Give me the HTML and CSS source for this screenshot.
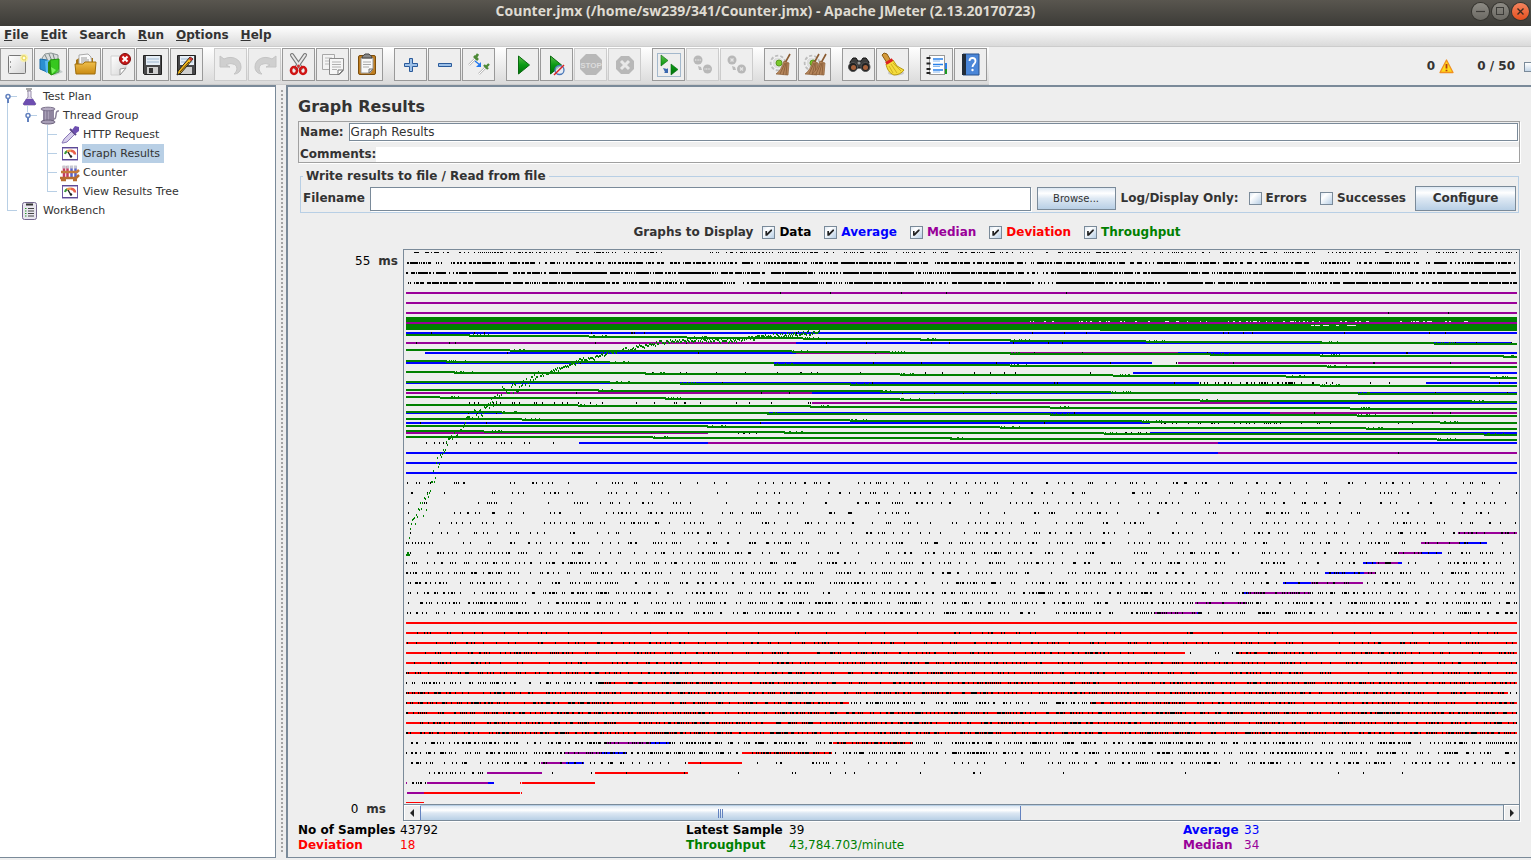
FILE: index.html
```html
<!DOCTYPE html>
<html lang="en">
<head>
<meta charset="utf-8">
<title>Counter.jmx - Apache JMeter</title>
<link rel="stylesheet" href="styles.css">
</head>
<body>
<svg class="defs" width="0" height="0" aria-hidden="true">
  <defs>
    <linearGradient id="gGreen" x1="0" y1="0" x2="0" y2="1"><stop offset="0" stop-color="#5fbf4a"/><stop offset=".5" stop-color="#0a9a14"/><stop offset="1" stop-color="#00700a"/></linearGradient>
    <linearGradient id="gGold" x1="0" y1="0" x2="0" y2="1"><stop offset="0" stop-color="#f0c04c"/><stop offset="1" stop-color="#c98a12"/></linearGradient>
    <linearGradient id="gPaper" x1="0" y1="0" x2="1" y2="1"><stop offset="0" stop-color="#ffffff"/><stop offset="1" stop-color="#d4d4d4"/></linearGradient>
    <linearGradient id="gFlask" x1="0" y1="0" x2="0" y2="1"><stop offset="0" stop-color="#f4f1fa"/><stop offset="1" stop-color="#c0b4d4"/></linearGradient>
    <symbol id="gear" viewBox="0 0 31 31">
      <circle cx="13" cy="14" r="7" fill="#e6e6e6" stroke="#bdbdbd" stroke-width="2.5" stroke-dasharray="3 2"/>
      <circle cx="13" cy="14" r="6" fill="#dedede" stroke="#f8f8f8"/>
      <circle cx="14" cy="14" r="3" fill="#7ac92a" stroke="#5a9a20"/>
    </symbol>
    <symbol id="broom" viewBox="0 0 31 31">
      <path d="M25 5l-5 9" stroke="#8a5a30" stroke-width="1.6"/>
      <path d="M19 12l5 2-1 12-12-1c4-3 6-7 8-13z" fill="#b5855a" stroke="#8c6038" stroke-width=".7"/>
      <path d="M20 14l-5 11M21 14l-3 12M22 14l-1 12" stroke="#7e5530" stroke-width=".7"/>
    </symbol>
    <symbol id="meter" viewBox="0 0 20 19">
      <rect x="2.5" y="4" width="15" height="12" fill="#fff" stroke="#6f5ba5" stroke-width="1"/>
      <path d="M2 3.500h16M2 15.500h16" stroke="#5d4a96" stroke-width="1"/>
      <path d="M5 10a5 4 0 0 1 2.500-3" fill="none" stroke="#3a9a3a" stroke-width="2"/>
      <path d="M7 7.500a5 4 0 0 1 4-.8" fill="none" stroke="#f09a50" stroke-width="2.500"/>
      <path d="M11 6.800a5 4 0 0 1 4 3.700" fill="none" stroke="#e8604a" stroke-width="2.500"/>
      <path d="M8 8l3 5" stroke="#222" stroke-width="1.400"/><circle cx="11" cy="12.500" r="1.200" fill="#222"/>
    </symbol>
  </defs>
</svg>

<header class="titlebar">
  <h1 class="titlebar-text">Counter.jmx (/home/sw239/341/Counter.jmx) - Apache JMeter (2.13.20170723)</h1>
  <div class="window-buttons">
    <button class="win" aria-label="Minimize"><svg width="17" height="17"><path d="M4 8.500h9" stroke="#3c3b37" stroke-width="1.200"/></svg></button>
    <button class="win" aria-label="Maximize"><svg width="17" height="17"><rect x="4.500" y="4.500" width="7" height="7" fill="none" stroke="#3c3b37"/></svg></button>
    <button class="win win-close" aria-label="Close"><svg width="17" height="17"><path d="M5.500 5.500l6 6m0-6l-6 6" stroke="#3c2a20" stroke-width="1.400"/></svg></button>
  </div>
</header>

<nav class="menubar">
  <button class="menu"><u>F</u>ile</button>
  <button class="menu"><u>E</u>dit</button>
  <button class="menu">Search</button>
  <button class="menu"><u>R</u>un</button>
  <button class="menu"><u>O</u>ptions</button>
  <button class="menu"><u>H</u>elp</button>
</nav>

<div class="toolbar">
  <div class="tools">
    <div class="tool-group">
      <button class="tool" aria-label="New"><svg viewBox="0 0 31 31"><rect x="7.500" y="6.500" width="17" height="18" rx="1" fill="url(#gPaper)" stroke="#777"/><path d="M9.500 12v2m0 3v2" stroke="#999"/><circle cx="23" cy="9" r="4" fill="#fbf3a0" opacity=".8"/><circle cx="23" cy="9" r="2" fill="#fffde0" stroke="#e8d34a"/></svg></button>
      <button class="tool" aria-label="Templates"><svg viewBox="0 0 31 31"><path d="M7 9l3-4 6-1 7 2v8H9z" fill="#d8dcdc" stroke="#8a9494"/><path d="M10 6l3 6M14 5l3 7M18 5l2 7" stroke="#7a8484"/><path d="M5 10l7 1v12l-7-3z" fill="#2b8fd0" stroke="#1c6da8"/><path d="M10 12l4-1v12l-3 1z" fill="#57b8f0"/><path d="M13 13l3-2v15l-3-2z" fill="#2f8a10"/><path d="M15 11l9-1v13l-8 3z" fill="#36c81e" stroke="#1f8f0c"/><path d="M16 18l5 3-4 4z" fill="#7df060"/><path d="M24 20l4 3-10 4z" fill="#9aa" opacity=".5"/></svg></button>
      <button class="tool" aria-label="Open"><svg viewBox="0 0 31 31"><path d="M7 20V11l3-2h14v12z" fill="#a87412"/><path d="M10 6l9-1 3 3 1 9H10z" fill="#fafafa" stroke="#aaa"/><path d="M12 9h6M12 11h8M12 13h8" stroke="#9a9a9a"/><path d="M6 15h8l2-2h11l-1 12H7z" fill="url(#gGold)" stroke="#a06f0c"/></svg></button>
      <button class="tool" aria-label="Close"><svg viewBox="0 0 31 31"><path d="M8 7h15v12l-6 7H8z" fill="url(#gPaper)" stroke="#d0d0d0"/><path d="M23 19l-6 7v-6z" fill="#fff" stroke="#999"/><circle cx="22" cy="10" r="5.500" fill="#c81818" stroke="#7e0c0c"/><path d="M19.500 7.500l5 5m0-5l-5 5" stroke="#fff" stroke-width="2"/></svg></button>
      <button class="tool" aria-label="Save"><svg viewBox="0 0 31 31"><path d="M6.500 6.500h18v19h-17l-1-1z" fill="#48484a" stroke="#222"/><rect x="9" y="7" width="14" height="9" fill="#e6eef6"/><path d="M10 10h12M10 13h12" stroke="#9db6cf"/><rect x="10" y="18" width="11" height="7" fill="#d0d0d0"/><rect x="12" y="19" width="4" height="5" fill="#333"/></svg></button>
      <button class="tool" aria-label="Save as"><svg viewBox="0 0 31 31"><path d="M6.500 6.500h18v19h-17l-1-1z" fill="#48484a" stroke="#222"/><rect x="9" y="7" width="14" height="9" fill="#e6eef6"/><path d="M10 10h12M10 13h12" stroke="#9db6cf"/><rect x="10" y="18" width="11" height="7" fill="#d0d0d0"/><path d="M19 8l3 2L10 24l-4 2 1-4z" fill="#f2b920" stroke="#222"/><path d="M18 13l-9 10" stroke="#5a3a00"/><path d="M19 8l3 2-2 2-2-2z" fill="#c33"/></svg></button>
    </div>
    <div class="tool-group">
      <button class="tool" disabled aria-label="Undo"><svg viewBox="0 0 31 31"><path d="M5 7l4 3c8-4 17 0 17 8 0 4-3 7-7 7 4-3 4-9-1-10-3-1-5 0-7 1l4 2H5z" fill="#cfcfcf" stroke="#c4c4c4"/></svg></button>
      <button class="tool" disabled aria-label="Redo"><svg viewBox="0 0 31 31"><path d="M27 7l-4 3c-8-4-17 0-17 8 0 4 3 7 7 7-4-3-4-9 1-10 3-1 5 0 7 1l-4 2h10z" fill="#cfcfcf" stroke="#c4c4c4"/></svg></button>
      <button class="tool" aria-label="Cut"><svg viewBox="0 0 31 31"><path d="M9 6l9 13M22 6l-9 13" stroke="#777" stroke-width="4" stroke-linecap="round"/><path d="M9 6l9 13M22 6l-9 13" stroke="#e8e8e8" stroke-width="2" stroke-linecap="round"/><ellipse cx="11" cy="21.500" rx="3" ry="3.500" fill="none" stroke="#d01414" stroke-width="2.600"/><ellipse cx="20" cy="21.500" rx="3" ry="3.500" fill="none" stroke="#d01414" stroke-width="2.600"/><circle cx="15.500" cy="17" r="1.500" fill="#c33"/></svg></button>
      <button class="tool" aria-label="Copy"><svg viewBox="0 0 31 31"><path d="M5.500 5.500h12v15h-12z" fill="#f3f3f3" stroke="#a8a8a8"/><path d="M8 9h7M8 12h4M8 15h4" stroke="#bbb"/><path d="M12.500 9.500h14v12l-4 4h-10z" fill="#f6f6f6" stroke="#8c8c8c"/><path d="M15 13h9M15 15.500h9M15 18h9M15 20.500h5" stroke="#b0b0b0"/><path d="M26 21l-5 5v-5z" fill="#fff" stroke="#777"/></svg></button>
      <button class="tool" aria-label="Paste"><svg viewBox="0 0 31 31"><rect x="7.500" y="6.500" width="17" height="19" rx="1.500" fill="#c07f22" stroke="#7c4d0c"/><path d="M10 9h12v11l-3 4h-9z" fill="#f8f8f8" stroke="#999"/><path d="M12 13h8M12 15.500h8M12 18h6" stroke="#aaa"/><path d="M22 20l-4 4v-4z" fill="#ddd" stroke="#777"/><path d="M11 9c0-3 2-2 3-4h4c1 2 3 1 3 4z" fill="#888" stroke="#444"/></svg></button>
    </div>
    <div class="tool-group">
      <button class="tool" aria-label="Expand all"><svg viewBox="0 0 31 31"><path d="M14.500 9.500h3v5h5v3h-5v5h-3v-5h-5v-3h5z" fill="#9cc0e8" stroke="#2a5a9a"/></svg></button>
      <button class="tool" aria-label="Collapse all"><svg viewBox="0 0 31 31"><path d="M9.500 14.500h13v3h-13z" fill="#9cc0e8" stroke="#2a5a9a"/></svg></button>
      <button class="tool" aria-label="Toggle"><svg viewBox="0 0 31 31"><path d="M6 16l8-8" stroke="#bbb" stroke-width="2.400"/><path d="M6 16l8-8" stroke="#fff"/><path d="M11 7l4 4M13 8l2-3" stroke="#4c8a36" stroke-width="2.600"/><path d="M16 25l7-7" stroke="#bbb" stroke-width="2.400"/><path d="M16 25l7-7" stroke="#fff"/><path d="M21 16l4 4M23 18l3-3" stroke="#4c8a36" stroke-width="2.400"/><path d="M12 12l5 4" stroke="#2277ee" stroke-width="1.500"/><path d="M18 13v5h-5z" fill="#2277ee"/></svg></button>
    </div>
    <div class="tool-group">
      <button class="tool" aria-label="Start"><svg viewBox="0 0 31 31"><path d="M11.500 7l11 9-11 9z" fill="url(#gGreen)" stroke="#0a6a10"/></svg></button>
      <button class="tool" aria-label="Start no pauses"><svg viewBox="0 0 31 31"><path d="M9.500 7l11 9-11 9z" fill="url(#gGreen)" stroke="#0a6a10"/><circle cx="18.500" cy="21" r="4.500" fill="#dfe8f5" fill-opacity=".7" stroke="#4a78b8" stroke-width="1.300"/><path d="M13 26L23 16" stroke="#d22" stroke-width="1.500"/></svg></button>
      <button class="tool" disabled aria-label="Stop"><svg viewBox="0 0 31 31"><path d="M11 5h10l6 6v9l-6 6H11l-6-6v-9z" fill="#b8b8b8"/><text x="16" y="19" class="stop-text" text-anchor="middle">STOP</text></svg></button>
      <button class="tool" disabled aria-label="Shutdown"><svg viewBox="0 0 31 31"><path d="M12 7h8l5 5v8l-5 5h-8l-5-5v-8z" fill="#b8b8b8"/><path d="M12 12l8 8m0-8l-8 8" stroke="#e8e8e8" stroke-width="3"/></svg></button>
    </div>
    <div class="tool-group">
      <button class="tool" aria-label="Remote start all"><svg viewBox="0 0 31 31"><rect x="4.500" y="4.500" width="23" height="23" fill="none" stroke="#a3b8cc"/><path d="M8 6l7 5.500-7 5.500zM18 15l7 5.500-7 5.500z" fill="url(#gGreen)" stroke="#0a6a10" stroke-width=".6"/><path d="M10 19l4 1 1-1v5h-4l1-1z" fill="#3a68b0"/></svg></button>
      <button class="tool" disabled aria-label="Remote stop all"><svg viewBox="0 0 31 31"><circle cx="11" cy="11" r="4.500" fill="#b8b8b8"/><circle cx="20.500" cy="20" r="4.500" fill="#b8b8b8"/><path d="M8 11h6M17.500 20h6" stroke="#d4d4d4" stroke-width="2" stroke-dasharray="1 .6"/><path d="M11 17l3 1 1 3h-3z" fill="#bbb"/></svg></button>
      <button class="tool" disabled aria-label="Remote shutdown all"><svg viewBox="0 0 31 31"><circle cx="11" cy="11" r="4.500" fill="#b8b8b8"/><circle cx="20.500" cy="20" r="4.500" fill="#b8b8b8"/><path d="M9.500 9.500l3 3m0-3l-3 3M19 18.500l3 3m0-3l-3 3" stroke="#e4e4e4" stroke-width="1.300"/><path d="M11 17l3 1 1 3h-3z" fill="#bbb"/></svg></button>
    </div>
    <div class="tool-group">
      <button class="tool" aria-label="Clear"><svg viewBox="0 0 31 31"><use href="#gear"/><use href="#broom"/></svg></button>
      <button class="tool" aria-label="Clear all"><svg viewBox="0 0 31 31"><use href="#gear"/><use href="#broom" x="-5"/><use href="#broom" x="2"/></svg></button>
    </div>
    <div class="tool-group">
      <button class="tool" aria-label="Find"><svg viewBox="0 0 31 31"><path d="M7 13l3-4h3l2 3h3l2-3h3l3 4-1 6H8z" fill="#3c3c3c" stroke="#111"/><circle cx="10" cy="18" r="4.500" fill="#222" stroke="#555"/><circle cx="10.500" cy="18.500" r="2.500" fill="#a5603a"/><circle cx="22.500" cy="18" r="4.500" fill="#222" stroke="#555"/><circle cx="22.500" cy="18.500" r="2.500" fill="#a5603a"/><circle cx="16" cy="14" r="1.500" fill="#999"/></svg></button>
      <button class="tool" aria-label="Reset search"><svg viewBox="0 0 31 31"><ellipse cx="19" cy="24" rx="8" ry="2.500" fill="#c8c8c8"/><path d="M5 6l2-2 3 1 4 7-4 2z" fill="#d49a3a" stroke="#8a5c14"/><path d="M9 15l7-4 4 6 7 4c-2 3-6 5-10 5-5-2-7-6-8-11z" fill="#f4dc3c" stroke="#b89a10"/><path d="M12 17l4 7M14 15l6 9M16 14l8 8" stroke="#cfb020"/><path d="M9 14.500l6.500-4" stroke="#d22" stroke-width="3"/></svg></button>
    </div>
    <div class="tool-group">
      <button class="tool" aria-label="Function helper"><svg viewBox="0 0 31 31"><rect x="21" y="14" width="5" height="6" fill="#2a80e8"/><rect x="21" y="20" width="5" height="5" fill="#1a9a20"/><rect x="8.500" y="6.500" width="15" height="19" fill="#fff" stroke="#999"/><path d="M12 10h10M12 15.500h10M12 21h10" stroke="#2a80e8" stroke-width="1.500"/><path d="M12 12h7M12 17.500h7M12 23h7" stroke="#88b8f0"/><path d="M5.500 9h4M5.500 14.500h4M5.500 20h4M5.500 24h4" stroke="#222" stroke-width="2"/></svg></button>
      <button class="tool" aria-label="Help"><svg viewBox="0 0 31 31"><path d="M8 5h16v21H8z" fill="#4a86d8" stroke="#28538e"/><path d="M7 5h4v21H7z" fill="#222c38"/><path d="M14.500 12c0-4 6-4 6 0 0 3-3 3-3 6" fill="none" stroke="#fff" stroke-width="1.800"/><circle cx="17.500" cy="21" r="1.200" fill="#fff"/></svg></button>
    </div>
  </div>
  <div class="status">
    <span>0</span>
    <svg class="warn" width="15" height="15" viewBox="0 0 15 15"><path d="M7.500 1L14 13.500H1z" fill="#ffd91a" stroke="#f09020" stroke-width="1.300" stroke-linejoin="round"/><path d="M7.500 5v4.500M7.500 10.800v1.500" stroke="#b23c10" stroke-width="1.800"/></svg>
    <span class="threads">0 / 50</span>
    <span class="run-light"></span>
  </div>
</div>

<main class="workspace">
  <aside class="tree">
    <ul class="nodes">
      <li class="node"><svg class="gutter" width="20" height="19"><path d="M7.500 10v9M10 9.500h7" stroke="#b8cfe5"/><path d="M8 12v4" stroke="#6382bf" stroke-width="2"/><circle cx="8" cy="9.500" r="2" fill="#fff" stroke="#6382bf" stroke-width="1.500"/></svg><svg width="20" height="19" viewBox="0 0 20 19"><path d="M6 2h6M7 4h4" stroke="#555" stroke-width="1.200"/><path d="M8 4v6l-5 7 1 1h11l1-1-5-7V4z" fill="url(#gFlask)" stroke="#9a90ac"/><path d="M6 12h7l3 5-1 1H4l-1-1z" fill="#6d4eb0"/></svg><span class="label">Test Plan</span></li>
      <li class="node"><svg class="gutter" width="40" height="19"><path d="M7.500 0v19M27.500 0v6M30 9.500h7" stroke="#b8cfe5"/><path d="M28 12v4" stroke="#6382bf" stroke-width="2"/><circle cx="28" cy="9.500" r="2" fill="#fff" stroke="#6382bf" stroke-width="1.500"/></svg><svg width="20" height="19" viewBox="0 0 20 19"><path d="M3 3h11v13H3z" fill="#8f859f"/><path d="M5.500 4v11M8.500 4v11" stroke="#aaa1b8"/><ellipse cx="8" cy="3" rx="7" ry="1.800" fill="#b4abc2" stroke="#7c728c"/><ellipse cx="8" cy="16" rx="7" ry="2" fill="#a79eb6" stroke="#6c627c"/><path d="M13 13c5 1 1-9 6-8" fill="none" stroke="#8a8098" stroke-width="1.500"/></svg><span class="label">Thread Group</span></li>
      <li class="node"><svg class="gutter" width="60" height="19"><path d="M7.500 0v19M47.500 0v19M48 9.500h9" stroke="#b8cfe5"/></svg><svg width="20" height="19" viewBox="0 0 20 19"><path d="M2 18l2-4 8-8 3 3-8 8-4 1z" fill="#d5cdea" stroke="#8a78b8"/><path d="M10 4l6 6" stroke="#5a4688" stroke-width="2"/><path d="M12 5l3-4 4 1v4l-4 3z" fill="#6d4eb0"/></svg><span class="label">HTTP Request</span></li>
      <li class="node"><svg class="gutter" width="60" height="19"><path d="M7.500 0v19M47.500 0v19M48 9.500h9" stroke="#b8cfe5"/></svg><svg width="20" height="19"><use href="#meter"/></svg><span class="label selected">Graph Results</span></li>
      <li class="node"><svg class="gutter" width="60" height="19"><path d="M7.500 0v19M47.500 0v19M48 9.500h9" stroke="#b8cfe5"/></svg><svg width="20" height="19" viewBox="0 0 20 19"><path d="M4 3v12M7.500 3v12" stroke="#c43c64" stroke-width="2.500"/><path d="M11.500 3v12M15.500 3v12" stroke="#5a62c8" stroke-width="2.500"/><path d="M2.500 4h15" stroke="#c8c8d0" stroke-width="3" stroke-dasharray="3 .8"/><path d="M1 9h16l2-2" fill="none" stroke="#c47a3c" stroke-width="2.500"/><path d="M0 15h16l3-3M1 17h5M13 17h4" fill="none" stroke="#b86c30" stroke-width="2.500"/></svg><span class="label">Counter</span></li>
      <li class="node"><svg class="gutter" width="60" height="19"><path d="M7.500 0v19M47.500 0v10M47 9.500h10" stroke="#b8cfe5"/></svg><svg width="20" height="19"><use href="#meter"/></svg><span class="label">View Results Tree</span></li>
      <li class="node"><svg class="gutter" width="20" height="19"><path d="M7.500 0v10M7 9.500h10" stroke="#b8cfe5"/></svg><svg width="20" height="19" viewBox="0 0 20 19"><rect x="2.500" y="1.500" width="14" height="17" rx="2" fill="#e9e6ef" stroke="#756890"/><path d="M6 3.500h7" stroke="#333" stroke-width="2"/><path d="M8 7.500h6M8 10h6M8 12.500h6M8 15h6" stroke="#444"/><path d="M5 7.500h1.500M5 10h1.500M5 12.500h1.500M5 15h1.500" stroke="#2a9a2a" stroke-width="1.200"/></svg><span class="label">WorkBench</span></li>
    </ul>
  </aside>
  <div class="divider"></div>
  <section class="panel">
    <h2 class="panel-title">Graph Results</h2>
    <div class="identity">
      <div class="name-row"><label for="name">Name:</label><input id="name" class="field" type="text" value="Graph Results"></div>
      <div class="comment-row"><label for="comments">Comments:</label><input id="comments" class="comment" type="text"></div>
    </div>
    <fieldset class="file-box">
      <legend>Write results to file / Read from file</legend>
      <div class="file-row">
        <label for="filename">Filename</label>
        <input id="filename" class="field filename" type="text">
        <button class="btn btn-small">Browse...</button>
        <span class="only">Log/Display Only:</span>
        <label class="check"><input type="checkbox">Errors</label>
        <label class="check"><input type="checkbox">Successes</label>
        <button class="btn btn-configure">Configure</button>
      </div>
    </fieldset>
    <div class="series">
      <span>Graphs to Display</span>
      <label class="check c-data"><input type="checkbox" checked>Data</label>
      <label class="check c-average"><input type="checkbox" checked>Average</label>
      <label class="check c-median"><input type="checkbox" checked>Median</label>
      <label class="check c-deviation"><input type="checkbox" checked>Deviation</label>
      <label class="check c-throughput"><input type="checkbox" checked>Throughput</label>
    </div>
    <div class="chart">
      <div class="axis">
        <div class="axis-top"><span class="num">55</span><b>ms</b></div>
        <div class="axis-bottom"><span class="num">0</span><b>ms</b></div>
      </div>
      <div class="scrollpane">
        <div class="plot"><svg id="plot" class="plot-svg" shape-rendering="crispEdges" role="img" aria-label="Response time graph"></svg></div>
        <div class="scrollbar">
          <button class="arrow arrow-left" aria-label="Scroll left"><svg width="6" height="8"><path d="M5 0v8L1 4z" fill="#222"/></svg></button>
          <div class="track"><div class="thumb"><i></i><i></i><i></i></div></div>
          <button class="arrow arrow-right" aria-label="Scroll right"><svg width="6" height="8"><path d="M1 0v8l4-4z" fill="#222"/></svg></button>
        </div>
      </div>
    </div>
    <div class="stats">
      <div class="stat-col">
        <b class="c-data">No of Samples</b><span class="c-data">43792</span>
        <b class="c-deviation">Deviation</b><span class="c-deviation">18</span>
      </div>
      <div class="stat-col">
        <b class="c-data">Latest Sample</b><span class="c-data">39</span>
        <b class="c-throughput">Throughput</b><span class="c-throughput">43,784.703/minute</span>
      </div>
      <div class="stat-col stat-narrow">
        <b class="c-average">Average</b><span class="c-average">33</span>
        <b class="c-median">Median</b><span class="c-median">34</span>
      </div>
    </div>
  </section>
</main>
<script src="plot.js"></script>
</body>
</html>
```

FILE: styles.css
```css
* { box-sizing: border-box; }
html, body { height: 100%; }
body {
  margin: 0;
  display: flex;
  flex-direction: column;
  background: #eeeeee;
  color: #333333;
  font: bold 12px/15px "DejaVu Sans", sans-serif;
  overflow: hidden;
}
button, input { font: inherit; color: inherit; margin: 0; padding: 0; }
.defs { position: absolute; }

.titlebar {
  flex: none;
  height: 26px;
  display: grid;
  grid-template-columns: 1fr auto 1fr;
  align-items: center;
  background: linear-gradient(#59564f, #3c3b37);
  color: #dfdbd2;
}
.titlebar-text {
  grid-column: 2;
  margin: 0;
  padding-bottom: 4px;
  font: bold 14px/18px "Open Sans", "Noto Sans", sans-serif;
  white-space: nowrap;
}
.window-buttons { justify-self: end; display: flex; gap: 3px; padding: 0 2px 4px 0; }
.win {
  width: 17px;
  height: 17px;
  border: 0;
  border-radius: 50%;
  background: linear-gradient(#8d8b84, #6b6963);
  box-shadow: 0 0 0 1px #35342f;
}
.win svg { display: block; }
.win-close { background: linear-gradient(#f4845e, #e4501f); }

.menubar {
  flex: none;
  height: 21px;
  display: flex;
  align-items: center;
  gap: 12px;
  padding: 0 4px 1px;
  background: linear-gradient(#ffffff, #dadada);
  border-bottom: 1px solid #cccccc;
}
.menu { border: 0; background: none; }

.toolbar { flex: none; height: 38px; display: flex; justify-content: space-between; }
.tools {
  display: flex;
  gap: 11px;
  padding: 1px 2px 3px 0;
  background: linear-gradient(#ffffff, #dadada);
  border-bottom: 1px solid #cccccc;
}
.tool-group { display: flex; gap: 1px; }
.tool {
  width: 33px;
  height: 33px;
  border: 1px solid #999999;
  background: #eeeeee;
}
.tool:disabled { border-color: #cccccc; }
.tool svg { display: block; width: 31px; height: 31px; }
.stop-text { font: bold 8px "Liberation Sans", sans-serif; fill: #dcdcdc; }
.status { display: flex; align-items: center; padding-top: 1px; }
.warn { margin: 0 23px 0 4px; }
.run-light {
  width: 7px;
  height: 10px;
  margin-left: 9px;
  border: 1px solid #7a8a99;
  border-right: 0;
  background: linear-gradient(#ffffff, #c4d6e8);
}

.workspace { flex: 1; min-height: 0; display: flex; padding-bottom: 2px; }
.tree {
  flex: none;
  width: 276px;
  background: #ffffff;
  border: solid #7a8a99;
  border-width: 2px 1px 1px 0;
}
.nodes { list-style: none; margin: 0; padding: 0; }
.node { display: flex; height: 19px; font-weight: normal; font-size: 11px; line-height: 19px; }
.node svg { flex: none; }
.label { margin-left: 2px; padding: 0 4px 0 1px; }
.selected { background: #b8cfe5; }

.divider {
  flex: none;
  width: 10px;
  background: radial-gradient(circle, #8a8a8a 0 0.6px, transparent 1px) 4px 4px / 4px 4px content-box #eeeeee;
  padding: 4px 2px 4px 4px;
}

.panel {
  flex: 1;
  min-width: 0;
  display: flex;
  flex-direction: column;
  padding: 10px 11px 4px 10px;
  border: solid #7a8a99;
  border-width: 2px 0 1px 2px;
}
.panel-title { margin: 0 0 4px; font-size: 16px; line-height: 20px; }
.identity { border: 1px solid #a0a0a0; box-shadow: 1px 1px #ffffff; }
.name-row { display: flex; align-items: center; gap: 5px; padding: 1px 1px 6px 1px; }
.comment-row { display: flex; padding-left: 1px; }
.field {
  flex: 1;
  min-width: 0;
  height: 18px;
  border: 1px solid #7a8a99;
  box-shadow: 1px 1px #ffffff;
  background: #ffffff;
  padding: 0 1px;
  font-weight: normal;
}
.comment { flex: 1; min-width: 0; height: 15px; border: 0; background: #ffffff; font-weight: normal; }
.file-box { margin: 6px 1px 0 2px; padding: 0 2px 1px 2px; border: 1px solid #b8cfe5; min-width: 0; }
.file-box legend { padding: 0 3px; }
.file-row { display: flex; align-items: center; padding-top: 2px; }
.filename { height: 24px; margin: 0 6px 0 5px; }
.btn {
  border: 1px solid #7a8a99;
  background: linear-gradient(#dde8f3, #ffffff 25%, #dde8f3 50%, #b8cfe5);
}
.btn-small { width: 79px; height: 23px; font-size: 10px; font-weight: normal; }
.btn-configure { width: 101px; height: 25px; margin-left: 9px; }
.only { margin-left: 5px; }
.file-row .check { margin-left: 10px; }
.file-row .check + .check { margin-left: 13px; }
.check { display: flex; align-items: center; gap: 4px; }
.check input {
  appearance: none;
  position: relative;
  width: 13px;
  height: 13px;
  border: 1px solid #7a8a99;
  background: linear-gradient(135deg, #dde8f3, #ffffff 30%, #b8cfe5);
}
.check input:checked::after {
  content: "";
  position: absolute;
  inset: 2px;
  background: #222222;
  clip-path: polygon(0 28%, 24% 28%, 24% 60%, 78% 6%, 96% 6%, 96% 24%, 26% 96%, 0 96%);
}
.series { display: flex; justify-content: center; gap: 13px; padding: 12px 4px 9px 0; }
.series span { margin-right: -4px; }
.c-data { color: #000000; }
.c-average { color: #0000ff; }
.c-median { color: #990099; }
.c-deviation { color: #ff0000; }
.c-throughput { color: #008000; }

.chart { flex: 1; min-height: 0; display: flex; }
.axis {
  flex: none;
  width: 105px;
  display: flex;
  flex-direction: column;
  justify-content: space-between;
  padding: 5px 5px 4px 0;
}
.axis-top, .axis-bottom { display: flex; justify-content: flex-end; gap: 8px; }
.axis-bottom { padding-right: 12px; }
.num { color: #000000; font-weight: normal; }
.scrollpane {
  flex: 1;
  min-width: 0;
  display: flex;
  flex-direction: column;
  border: 1px solid #7a8a99;
  box-shadow: 1px 1px #ffffff;
}
.plot { flex: 1; min-height: 0; overflow: hidden; }
.plot-svg { display: block; width: 100%; height: 100%; }
.scrollbar { flex: none; height: 16px; display: flex; border-top: 1px solid #7a8a99; }
.arrow {
  flex: none;
  width: 16px;
  border: 0;
  background: #eeeeee;
  box-shadow: inset 1px 1px #ffffff;
  display: flex;
  align-items: center;
  justify-content: center;
}
.arrow-right { border-left: 1px solid #7a8a99; }
.track { flex: 1; display: flex; border-top: 1px solid #b8cfe5; }
.thumb {
  width: 55.5%;
  display: flex;
  align-items: center;
  justify-content: center;
  gap: 1px;
  border: solid #6382bf;
  border-width: 0 1px;
  background: linear-gradient(#dde8f3, #ffffff 30%, #dde8f3 50%, #b8cfe5);
}
.thumb i { width: 1px; height: 9px; background: #6382bf; }

.stats {
  display: grid;
  grid-template-columns: 388fr 497fr 337fr;
  padding-top: 2px;
}
.stat-col { display: grid; grid-template-columns: 102px 1fr; }
.stat-col span { font-weight: normal; }
.stat-col:nth-child(2) { grid-template-columns: 103px 1fr; }
.stat-narrow { grid-template-columns: 61px 1fr; }
```

FILE: plot.js
```js
(function () {
  var LEFT = 404, TOP = 250, X0 = 406, X1 = 1517;
  var COLORS = { k: '#000000', b: '#0000ff', p: '#990099', r: '#ff0000', g: '#008000', w: '#eeeeee' };
  var svg = document.getElementById('plot');
  var seed = 20170723;
  function rnd() {
    seed = (seed + 0x6D2B79F5) | 0;
    var t = Math.imul(seed ^ (seed >>> 15), 1 | seed);
    t = (t + Math.imul(t ^ (t >>> 7), 61 | t)) ^ t;
    return ((t ^ (t >>> 14)) >>> 0) / 4294967296;
  }
  function rect(x, y, w, h) {
    return 'M' + (x - LEFT) + ' ' + (y - TOP) + 'h' + w + 'v' + h + 'h-' + w + 'z';
  }
  function paint(color, d) {
    var path = document.createElementNS('http://www.w3.org/2000/svg', 'path');
    path.setAttribute('fill', COLORS[color]);
    path.setAttribute('d', d);
    svg.appendChild(path);
  }

  // Samples: [row, density, from, to, height]
  var samples = [
    [252, .50, 409, 665, 1], [252, .45, 710, X1, 1],
    [262, .60], [272, .78], [282, .78], [292, .008], [302, .003], [312, .003],
    [322, .008], [332, .025], [342, .015], [352, .01], [362, .01], [372, .05, 450, 1133],
    [382, .015], [382, .40, 1200, 1300], [382, .10, 1300, 1425],
    [392, .01], [402, .12, 440, 812], [412, .006], [422, .006],
    [422, .30, 1150, 1290], [422, .08, 1290, 1420], [432, .35, 735, 760], [432, .45, 1125, 1147],
    [442, .14, 413, 570], [452, .002], [462, .003],
    [482, .15], [492, .12], [502, .14], [512, .16], [522, .18], [532, .19], [542, .20],
    [552, .23], [562, .26], [572, .27], [582, .30], [592, .34], [602, .36], [612, .38],
    [632, .10], [642, .17], [652, .24], [662, .26], [672, .30], [682, .36], [692, .40],
    [702, .40], [712, .44], [722, .42], [732, .46], [742, .48], [752, .46], [762, .28, 406, 600],
    [762, .12, 600, 1050], [762, .38, 1050, X1], [772, .24, 428, 490], [772, .04, 545, 950],
    [772, .01, 950, X1], [782, .45, 412, 430]
  ];

  // Level lines: colour, row, from, to
  var lines = [
    ['p', 292], ['p', 302], ['p', 312], ['b', 332],
    ['p', 342, 406, 796], ['b', 342, 796, 1512],
    ['b', 352, 425, 796], ['p', 352, 796, 1178], ['b', 352, 1178, 1517],
    ['b', 362, 406, 1152], ['p', 362, 1178, 1517], ['b', 372, 1133, 1517],
    ['b', 382, 406, 1199], ['b', 382, 1426, 1517],
    ['p', 392, 406, 812], ['b', 392, 812, 1517],
    ['p', 402, 812, 1270], ['b', 402, 1270, 1517],
    ['b', 412, 406, 1270], ['p', 412, 1270, 1517], ['b', 422, 406, 1150],
    ['p', 432, 406, 708], ['b', 432, 1150, 1517],
    ['b', 442, 579, 708], ['p', 442, 708, 1218], ['b', 442, 1218, 1517],
    ['b', 452, 406, 1218], ['p', 452, 1218, 1517], ['b', 462], ['b', 472],
    ['p', 532, 1458, 1517], ['p', 542, 1421, 1459], ['b', 542, 1459, 1487],
    ['p', 552, 1398, 1422], ['b', 552, 1422, 1442],
    ['b', 562, 1363, 1376], ['p', 562, 1376, 1398], ['b', 562, 1398, 1402],
    ['b', 572, 1325, 1364], ['p', 572, 1364, 1376],
    ['b', 582, 1283, 1311], ['p', 582, 1311, 1363],
    ['b', 592, 1243, 1248], ['p', 592, 1248, 1310], ['p', 602, 1195, 1247],
    ['p', 612, 1155, 1197], ['b', 612, 1197, 1202],
    ['r', 622], ['r', 632], ['r', 642], ['r', 652, 406, 1185], ['r', 652, 1236, 1517],
    ['r', 662], ['r', 672], ['r', 682, 598, 1517], ['r', 692, 406, 1508],
    ['r', 702, 406, 849], ['r', 702, 1090, 1517], ['r', 712], ['r', 722], ['r', 732],
    ['p', 742, 604, 650], ['b', 742, 650, 671], ['r', 742, 833, 913],
    ['p', 752, 565, 602], ['b', 752, 602, 626], ['r', 752, 742, 832],
    ['p', 762, 541, 566], ['b', 762, 566, 584], ['r', 762, 688, 742],
    ['p', 772, 487, 542], ['r', 772, 595, 688],
    ['p', 782, 406, 407], ['p', 782, 427, 488], ['b', 782, 488, 494],
    ['r', 782, 520, 521], ['r', 782, 522, 595],
    ['p', 792, 407, 424], ['r', 792, 424, 520], ['r', 792, 521, 522]
  ];

  // Throughput traces: pairs of start x and y; each step runs to the next start
  var traces = [
    [406, 334, 469, 335, 589, 336, 687, 337, 803, 338, 920, 339, 1010, 340, 1146, 341, 1320, 342, 1434, 343],
    [406, 349, 510, 350, 792, 351, 890, 352, 1010, 353, 1210, 354, 1320, 355, 1503, 356],
    [406, 360, 446, 361, 610, 362, 774, 364, 1010, 365, 1327, 366],
    [406, 371, 454, 372, 645, 373, 900, 374, 1113, 375, 1286, 376, 1490, 377],
    [406, 381, 610, 382, 680, 383, 850, 384, 1320, 385],
    [406, 389, 598, 390, 880, 391, 1111, 392, 1358, 393],
    [406, 396, 440, 397, 665, 398, 900, 399, 1200, 400, 1470, 401],
    [406, 404, 578, 405, 810, 406, 1050, 407, 1350, 408],
    [406, 411, 502, 412, 767, 413, 1050, 414, 1357, 415],
    [406, 418, 522, 419, 850, 420, 1142, 421, 1440, 422],
    [406, 425, 707, 426, 1000, 427, 1366, 428],
    [406, 430, 484, 431, 784, 432, 1104, 433, 1484, 434],
    [406, 436, 653, 437, 950, 438, 1437, 439]
  ];

  // Ramp-up of the throughput: x, y
  var ramp = [
    409, 534, 414, 521, 419, 512, 426, 503, 428, 490, 431, 481, 434, 474, 437, 460, 442, 450,
    448, 441, 456, 431, 464, 424, 470, 414, 482, 412, 488, 404, 497, 398, 501, 391, 515, 387,
    530, 381, 537, 375, 550, 371, 572, 364, 580, 359, 594, 358, 603, 353, 620, 350, 640, 346,
    655, 343, 670, 340, 700, 339, 730, 340, 760, 336, 790, 334, 820, 331
  ];

  lines.forEach(function (l) {
    var from = l[2] || X0, to = l[3] || X1;
    paint(l[0], rect(from, l[1], to - from, 2));
  });
  paint('r', rect(406, 802, 18, 1));

  var black = '';
  samples.forEach(function (s) {
    var from = s[2] || X0, to = s[3] || X1, phase = rnd() * 6;
    for (var x = from; x < to; x++) {
      var d = s[1] * (1 + .35 * Math.sin(x / 37 + phase) * Math.sin(x / 11 + phase));
      if (rnd() < d && (s[1] > .55 || x % 2 === 0 || rnd() < .5)) {
        black += rect(x, s[0], 1, s[4] || 2);
      }
    }
  });

  var green = rect(406, 317, 1111, 5) + rect(406, 324, 1111, 3) + rect(406, 327, 200, 3) +
    rect(606, 328, 494, 2) + rect(1100, 327, 417, 4) + rect(606, 326, 911, 2);
  traces.forEach(function (t) {
    for (var i = 0; i < t.length; i += 2) {
      var end = i + 2 < t.length ? t[i + 2] : X1;
      green += rect(t[i], t[i + 1], end - t[i], 2);
      for (var n = 0; i > 0 && n < 6; n++) {
        green += rect(t[i] + Math.floor(rnd() * 20), t[i + 1] - 1, 1, 2);
      }
    }
  });
  for (var i = 0; i + 3 < ramp.length; i += 2) {
    for (var x = ramp[i]; x < ramp[i + 2]; x++) {
      var f = (x - ramp[i]) / (ramp[i + 2] - ramp[i]);
      var y = ramp[i + 1] + f * (ramp[i + 3] - ramp[i + 1]);
      var spread = x < 440 ? 18 : x < 540 ? 9 : 4;
      green += rect(x, Math.round(y + (rnd() - .5) * spread), 1, 2);
    }
  }
  green += rect(406, 554, 4, 2) + rect(407, 552, 2, 2);

  var specks = '';
  for (var s = 0; s < 70; s++) {
    specks += rect(1030 + Math.floor(rnd() * 440), 321, 1 + Math.floor(rnd() * 2), 1);
  }
  for (var q = 0; q < 14; q++) {
    specks += rect(1305 + Math.floor(rnd() * 50), 325, 3, 1);
  }

  paint('k', black);
  paint('g', green);
  paint('w', specks);
  paint('p', rect(406, 322, 1111, 2));
})();
```
